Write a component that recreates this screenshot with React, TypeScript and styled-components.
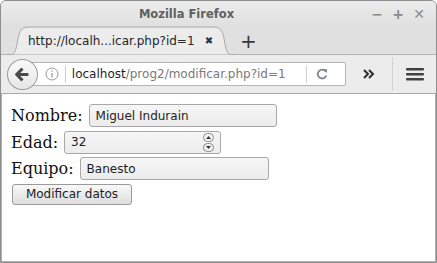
import styled, { createGlobalStyle } from 'styled-components';

const GlobalStyle = createGlobalStyle`
  html, body {
    margin: 0;
    padding: 0;
  }
  body {
    width: 437px;
    height: 263px;
    overflow: hidden;
    background: #ffffff;
  }
`;

const Window = styled.div`
  width: 437px;
  height: 263px;
  box-sizing: border-box;
  border: 1px solid #8e8e8e;
  border-radius: 6px 6px 0 0;
  display: flex;
  flex-direction: column;
  overflow: hidden;
  font-family: 'DejaVu Sans', sans-serif;
  background: #dcdcdc;
`;

const TitleBar = styled.div`
  height: 25px;
  flex: none;
  display: flex;
  align-items: center;
  background: linear-gradient(#ececec, #e0e0e0);
`;

const Title = styled.div`
  flex: 1;
  text-align: center;
  font-weight: bold;
  font-size: 11.5px;
  color: #606060;
`;

const Controls = styled.div`
  width: 64px;
  display: flex;
  align-items: center;
  justify-content: space-between;
  padding-right: 12px;
  box-sizing: border-box;
`;

const ControlGlyph = styled.span`
  width: 10px;
  display: flex;
  justify-content: center;
  color: #8a8a8a;
  font-size: 14px;
  font-weight: bold;
  line-height: 1;
`;

const TabStrip = styled.div`
  height: 29px;
  flex: none;
  display: flex;
  align-items: flex-end;
  background: #e0e0e0;
  box-shadow: inset 0 -1px 0 #b5b5b5;
`;

const Tab = styled.div`
  position: relative;
  width: 228px;
  height: 29px;
  margin-left: 6px;
  display: flex;
  align-items: center;
  padding-left: 21px;
  box-sizing: border-box;
  font-size: 12px;
  color: #262626;
`;

const TabShape = styled.svg`
  position: absolute;
  inset: 0;
  z-index: 0;
`;

const TabLabel = styled.span`
  position: relative;
  flex: 1;
  white-space: nowrap;
`;

const TabClose = styled.span`
  position: relative;
  width: 24px;
  font-size: 10px;
  font-weight: bold;
  color: #333;
  margin-right: 14px;
  text-align: center;
`;

const NewTab = styled.span`
  margin-left: 5px;
  height: 29px;
  display: flex;
  align-items: center;
  font-size: 20px;
  color: #3a3a3a;
`;

const NavBar = styled.div`
  height: 39px;
  flex: none;
  display: flex;
  align-items: center;
  background: #ececec;
  border-bottom: 1px solid #a9a9a9;
  box-sizing: border-box;
  padding-left: 6px;
`;

const BackButton = styled.div`
  position: relative;
  z-index: 1;
  width: 31px;
  height: 31px;
  border-radius: 50%;
  border: 1px solid #9d9d9d;
  background: linear-gradient(#fafafa, #e6e6e6);
  box-sizing: border-box;
  display: flex;
  align-items: center;
  justify-content: center;
`;

const UrlBar = styled.div`
  margin-left: -8px;
  width: 318px;
  height: 24px;
  box-sizing: border-box;
  border: 1px solid #b4b4b4;
  border-radius: 2px;
  background: #ffffff;
  display: flex;
  align-items: center;
  padding-left: 14px;
  padding-right: 8px;
`;

const Divider = styled.span<{ $h: number }>`
  width: 1px;
  height: ${(p) => p.$h}px;
  background: #d0d0d0;
  flex: none;
`;

const UrlText = styled.span`
  flex: 1;
  margin-left: 6px;
  font-size: 12px;
  color: #7a7a7a;
  white-space: nowrap;
`;

const Host = styled.span`
  color: #1f1f1f;
`;

const ToolIcon = styled.div<{ $w: number }>`
  width: ${(p) => p.$w}px;
  display: flex;
  justify-content: center;
  align-items: center;
  flex: none;
`;

const ToolDivider = styled.span`
  width: 1px;
  height: 34px;
  background: #d2d2d2;
`;

const Content = styled.div`
  flex: 1;
  background: #ffffff;
  border-left: 1px solid #b0b0b0;
  border-right: 1px solid #b0b0b0;
  border-bottom: 1px solid #b0b0b0;
  padding: 10px 9px;
  display: flex;
  flex-direction: column;
  gap: 3.5px;
  align-items: flex-start;
`;

const Row = styled.div`
  display: flex;
  align-items: center;
  gap: 6px;
`;

const Label = styled.span`
  font-family: 'DejaVu Serif', serif;
  font-size: 16px;
  color: #111;
`;

const Field = styled.div<{ $w: number }>`
  position: relative;
  width: ${(p) => p.$w}px;
  height: 23px;
  box-sizing: border-box;
  border: 1px solid #a8a8a8;
  border-radius: 3px;
  background: linear-gradient(#f6f6f6, #ececec);
  display: flex;
  align-items: center;
  padding-left: 6px;
  font-size: 12px;
  color: #1e1e1e;
`;

const Spinner = styled.div`
  position: absolute;
  right: 6px;
  top: 1px;
  display: flex;
  flex-direction: column;
  gap: 1px;
`;

const SpinButton = styled.span`
  width: 11px;
  height: 9px;
  box-sizing: border-box;
  border: 1px solid #8a8a8a;
  border-radius: 5px;
  background: #f4f4f4;
  display: flex;
  align-items: center;
  justify-content: center;
`;

const Submit = styled.div`
  margin-left: 1px;
  width: 120px;
  height: 21px;
  box-sizing: border-box;
  border: 1px solid #9a9a9a;
  border-radius: 3px;
  background: linear-gradient(#f8f8f8, #dedede);
  display: flex;
  align-items: center;
  justify-content: center;
  font-size: 12px;
  color: #222;
`;

const Triangle = ({ up }: { up?: boolean }) => (
  <svg width="5" height="3" viewBox="0 0 5 3">
    <path d={up ? 'M0 3 L2.5 0 L5 3 Z' : 'M0 0 L2.5 3 L5 0 Z'} fill="#333" />
  </svg>
);

export default function App() {
  return (
    <>
      <GlobalStyle />
      <Window>
        <TitleBar>
          <Title>Mozilla Firefox</Title>
          <Controls>
            <ControlGlyph>−</ControlGlyph>
            <ControlGlyph>+</ControlGlyph>
            <ControlGlyph>✕</ControlGlyph>
          </Controls>
        </TitleBar>

        <TabStrip>
          <Tab>
            <TabShape width="228" height="29" viewBox="0 0 228 29">
              <path
                d="M0 29 C8 29 8 27 10 18 C12 6 13 1 22 1 L206 1 C215 1 216 6 218 18 C220 27 220 29 228 29 Z"
                fill="#ececec"
                stroke="#a8a8a8"
                strokeWidth="1"
              />
            </TabShape>
            <TabLabel>http://localh...icar.php?id=1</TabLabel>
            <TabClose>✖</TabClose>
          </Tab>
          <NewTab>+</NewTab>
        </TabStrip>

        <NavBar>
          <BackButton>
            <svg width="15" height="15" viewBox="0 0 14 14">
              <path d="M7 1.5 L1.5 7 L7 12.5 M1.8 7 H12.5" fill="none" stroke="#4a4a4a" strokeWidth="2.8" strokeLinejoin="round" />
            </svg>
          </BackButton>
          <UrlBar>
            <ToolIcon $w={14}>
              <svg width="14" height="14" viewBox="0 0 14 14">
                <circle cx="7" cy="7" r="6" fill="none" stroke="#9a9a9a" strokeWidth="1" />
                <rect x="6.4" y="6" width="1.3" height="4.5" fill="#9a9a9a" />
                <rect x="6.4" y="3.5" width="1.3" height="1.3" fill="#9a9a9a" />
              </svg>
            </ToolIcon>
            <span style={{ width: 6 }} />
            <Divider $h={18} />
            <UrlText>
              <Host>localhost</Host>/prog2/modificar.php?id=1
            </UrlText>
            <Divider $h={18} />
            <ToolIcon $w={30}>
              <svg width="12" height="12" viewBox="0 0 12 12">
                <path d="M9.8 3.6 A4.4 4.4 0 1 0 10.3 7.5" fill="none" stroke="#7c8590" strokeWidth="1.8" />
                <path d="M7.2 1.2 L11 1.2 L11 5 Z" fill="#7c8590" />
              </svg>
            </ToolIcon>
          </UrlBar>
          <ToolIcon $w={46}>
            <svg width="12" height="10" viewBox="0 0 12 10">
              <path d="M1 1 L5 5 L1 9 M6 1 L10 5 L6 9" fill="none" stroke="#2e2e2e" strokeWidth="2" />
            </svg>
          </ToolIcon>
          <ToolDivider />
          <ToolIcon $w={43}>
            <svg width="18" height="16" viewBox="0 0 18 16">
              <rect x="0" y="2" width="18" height="2.4" rx="1" fill="#404040" />
              <rect x="0" y="7" width="18" height="2.4" rx="1" fill="#404040" />
              <rect x="0" y="12" width="18" height="2.4" rx="1" fill="#404040" />
            </svg>
          </ToolIcon>
        </NavBar>

        <Content>
          <Row>
            <Label>Nombre:</Label>
            <Field $w={188}>Miguel Indurain</Field>
          </Row>
          <Row>
            <Label>Edad:</Label>
            <Field $w={157}>
              32
              <Spinner>
                <SpinButton>
                  <Triangle up />
                </SpinButton>
                <SpinButton>
                  <Triangle />
                </SpinButton>
              </Spinner>
            </Field>
          </Row>
          <Row>
            <Label>Equipo:</Label>
            <Field $w={189}>Banesto</Field>
          </Row>
          <Submit>Modificar datos</Submit>
        </Content>
      </Window>
    </>
  );
}
